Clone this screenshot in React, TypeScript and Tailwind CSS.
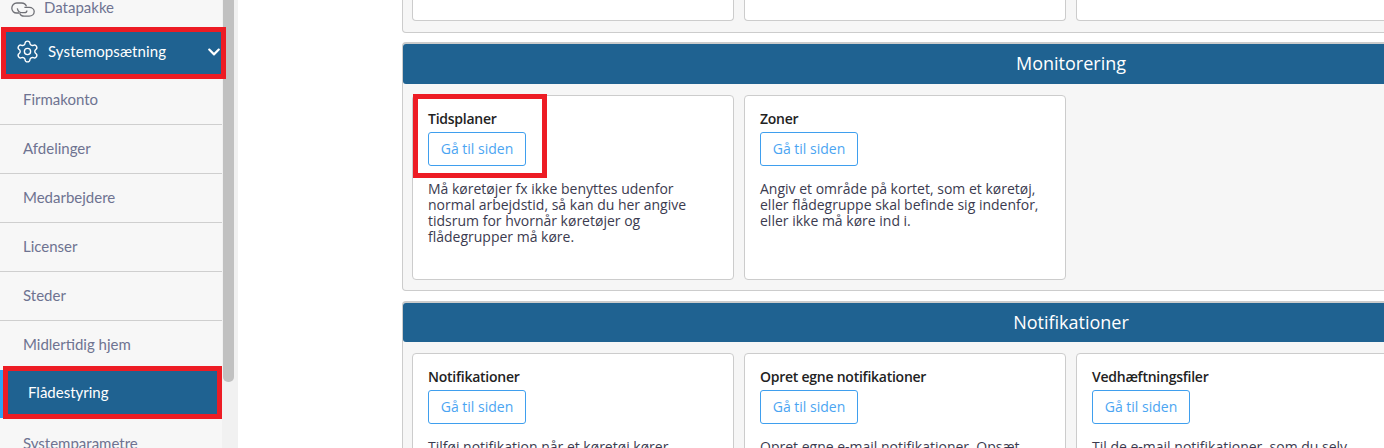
import React from "react"
import { Settings } from "lucide-react"
import { FaChevronDown } from "react-icons/fa"

const navItems = ["Firmakonto", "Afdelinger", "Medarbejdere", "Licenser", "Steder", "Midlertidig hjem"]

function RedBox({ className }: { className: string }) {
  return <div className={`absolute border-[5px] border-[#ed1c24] pointer-events-none ${className}`} />
}

function LinkIcon() {
  return (
    <svg width="24" height="17" viewBox="0 0 24 17" fill="none" stroke="#6f7076" strokeWidth="1.3" className="shrink-0">
      <path d="M8 13H5.600C3 13 .8 11 .8 8.300 .8 5.300 3 3 5.800 3h4.700c2.400 0 4.300 1.300 5 3.400" />
      <path d="M6.300 8.300c.6 2.800 2.500 4.400 5.200 4.400h1.800c1.600 0 2.600-1 2.600-2.300" />
      <path d="M13.400 7.400h4.800c2.800 0 5 1.900 5 4.200 0 2.600-2.200 4.600-5 4.600h-5c-2.300 0-4-1.200-4.500-3.200" />
    </svg>
  )
}

function Sidebar() {
  return (
    <div className="w-[238px] h-[448px] shrink-0 flex overflow-hidden font-['Lato',sans-serif]">
      <div className="w-[222px] bg-[#f7f7f7] flex flex-col">
        <div className="h-[27px] shrink-0 flex items-start pl-[11px] gap-[9px] text-[15px] leading-[14px] text-[#6e7391]">
          <LinkIcon />
          <span>Datapakke</span>
        </div>
        <div className="relative z-10 h-[52px] shrink-0 w-[225px] ml-[1px] border-[5px] border-[#ed1c24] bg-[#1f6291] flex items-center pl-[9px] pb-[3px] text-white text-[15px] tracking-[0.12px]">
          <Settings size={25} strokeWidth={1.3} className="mr-[8px]" />
          <span>Systemopsætning</span>
          <FaChevronDown size={14} className="absolute right-0 top-[13px]" />
        </div>
        <div className="flex flex-col shrink-0 -mt-[3px]">
          {navItems.map((n) => (
            <div key={n} className="h-[49px] shrink-0 pl-[23px] pt-[14px] text-[15px] leading-[18px] text-[#6e7391] border-b border-[#cfcfcf] last:border-b-0">
              {n}
            </div>
          ))}
        </div>
        <div className="relative h-[53px] shrink-0 -mt-[4px] pl-[3px]">
          <div className="absolute left-0 top-[4px] w-[3px] h-[48px] bg-[#2ea3f2]" />
          <div className="h-full border-[5px] border-[#ed1c24] bg-[#1f6291] text-white text-[15px] flex items-center pl-[20px]">
            Flådestyring
          </div>
        </div>
        <div className="shrink-0 pl-[23px] pt-[15px] text-[15px] leading-[18px] text-[#6e7391]">Systemparametre</div>
      </div>
      <div className="w-[16px] bg-[#f1f1f1] pl-[1px]">
        <div className="w-[11px] h-[382px] bg-[#c1c1c1] rounded-b-[5px]" />
      </div>
    </div>
  )
}

function Card({ title, text }: { title: string; text?: string }) {
  return (
    <div className="w-[322px] h-[185px] shrink-0 bg-white border border-[#cccccc] rounded-[4px] px-[15px] pt-[13px]">
      <div className="text-[14px] leading-[20px] font-semibold tracking-[-0.25px] text-[#222]">{title}</div>
      <button className="mt-[3px] h-[34px] w-[98px] border border-[#3f9fee] rounded-[3px] text-[14px] text-[#4ba5f2] bg-white pb-[2px]">
        Gå til siden
      </button>
      {text && <p className="mt-[15px] text-[14px] leading-[16px] text-[#3b3b4f]">{text}</p>}
    </div>
  )
}

function Section({ title, className, headerClass, children }: { title: string; className: string; headerClass: string; children: React.ReactNode }) {
  return (
    <div className={`w-[1338px] bg-[#f6f6f6] border border-t-2 border-[#cccccc] rounded-[4px] ${className}`}>
      <div className={`bg-[#1f6291] rounded-[3px] flex items-center justify-center text-white text-[18px] ${headerClass}`}>
        {title}
      </div>
      <div className="flex gap-[10px] px-[9px] pt-[11px] pb-[10px]">{children}</div>
    </div>
  )
}

export default function App() {
  return (
    <div className="w-[1384px] h-[448px] overflow-hidden flex bg-white">
      <Sidebar />
      <div className="pl-[164px] font-['Open_Sans',sans-serif]">
        <div className="w-[1338px] h-[33px] bg-[#f6f6f6] border border-t-0 border-[#cccccc] rounded-b-[4px] flex gap-[10px] px-[9px]">
          <div className="w-[322px] h-[21px] shrink-0 bg-white border border-t-0 border-[#cccccc] rounded-b-[4px]" />
          <div className="w-[322px] h-[21px] shrink-0 bg-white border border-t-0 border-[#cccccc] rounded-b-[4px]" />
          <div className="w-[322px] h-[21px] shrink-0 bg-white border border-t-0 border-[#cccccc] rounded-b-[4px]" />
        </div>
        <div className="relative pt-[9px]">
          <Section title="Monitorering" className="" headerClass="h-[40px] pb-[1px]">
            <Card
              title="Tidsplaner"
              text="Må køretøjer fx ikke benyttes udenfor normal arbejdstid, så kan du her angive tidsrum for hvornår køretøjer og flådegrupper må køre."
            />
            <Card
              title="Zoner"
              text="Angiv et område på kortet, som et køretøj, eller flådegruppe skal befinde sig indenfor, eller ikke må køre ind i."
            />
          </Section>
          <RedBox className="left-[11px] top-[61px] w-[134px] h-[84px]" />
        </div>
        <Section title="Notifikationer" className="mt-[10px]" headerClass="h-[39px]">
          <Card title="Notifikationer" text="Tilføj notifikation når et køretøj kører udenfor en zone eller tidsplan." />
          <Card title="Opret egne notifikationer" text="Opret egne e-mail notifikationer. Opsæt dem efter behov for din flåde." />
          <Card title="Vedhæftningsfiler" text="Til de e-mail notifikationer, som du selv opretter, kan du vedhæfte filer." />
        </Section>
      </div>
    </div>
  )
}
